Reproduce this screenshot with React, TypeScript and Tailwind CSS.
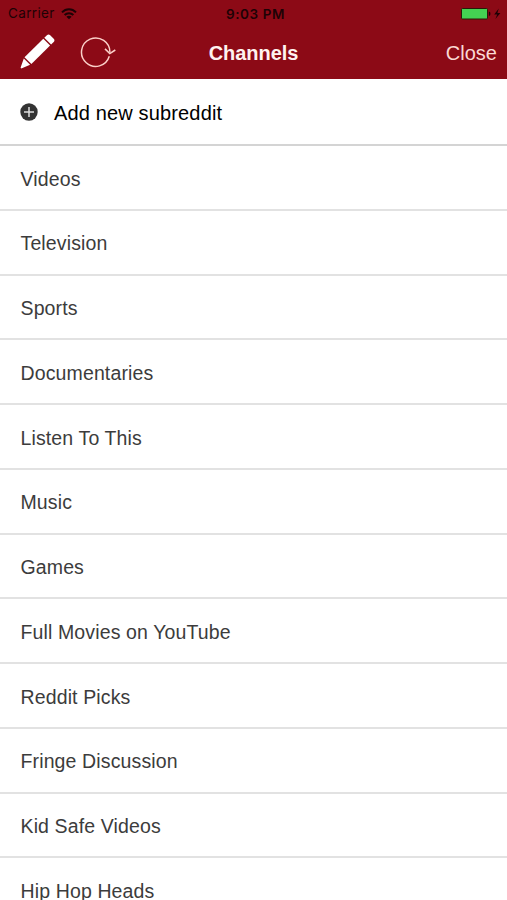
const channels = [
  "Videos",
  "Television",
  "Sports",
  "Documentaries",
  "Listen To This",
  "Music",
  "Games",
  "Full Movies on YouTube",
  "Reddit Picks",
  "Fringe Discussion",
  "Kid Safe Videos",
  "Hip Hop Heads",
];

function WifiIcon() {
  return (
    <svg width="16" height="12" viewBox="0 0 16 12" fill="none" stroke="#1d0205" strokeWidth="2">
      <path d="M1 4.4C5 .3 11 .3 15 4.4" />
      <path d="M3.6 7C6.1 4.5 9.9 4.5 12.4 7" />
      <path d="M8 11.3 5.4 8.8c1.5-1.3 3.7-1.3 5.2 0z" fill="#1d0205" stroke="none" />
    </svg>
  );
}

function BatteryIcon() {
  return (
    <svg width="42" height="12" viewBox="0 0 42 12">
      <rect x=".5" y=".5" width="26" height="10.5" rx="1" fill="#44d152" stroke="#2a1a08" />
      <path d="M27.9 3.8h.6c1.2.3 1.2 3.6 0 3.9h-.6z" fill="#1d0205" />
      <path d="M37.8.4 33.2 6.4h3L34.4 11l5-6.1h-3z" fill="#1d0205" />
    </svg>
  );
}

function PencilIcon() {
  return (
    <svg width="36" height="36" viewBox="0 0 36 36" fill="#fff">
      <path d="M24.3 3.7 26.9 1.2c1-1 2.3-1 3.3 0l3.5 3.5c1 1 1 2.3 0 3.3L31.1 10.5z" />
      <path d="M23.3 4.7 30.1 11.5 11.4 30.1 4.5 23.3z" />
      <path d="M3.8 24.5 10.1 30.8 1.9 34.3C1 34.6.4 34 .8 33.1z" />
    </svg>
  );
}

function RefreshIcon() {
  return (
    <svg width="36" height="32" viewBox="0 0 36 32" fill="none" stroke="#fbcfc8" strokeWidth="1.5">
      <path d="M29.3 20.3A14.2 14.2 0 1 1 29.9 16.6" />
      <path d="M25 12.9 29.8 17.6 35.3 14" />
    </svg>
  );
}

function AddIcon() {
  return (
    <svg width="18" height="18" viewBox="0 0 18 18">
      <circle cx="9" cy="9" r="8.7" fill="#333" />
      <path d="M9 4v10M4 9h10" stroke="#ddd" strokeWidth="1.5" />
    </svg>
  );
}

export default function App() {
  return (
    <div className="h-[900px] w-[507px] overflow-hidden bg-white font-['Liberation_Sans',Arial,sans-serif]">
      <header className="h-[79px] bg-[#8c0a16] text-white">
        <div className="grid h-[27px] grid-cols-3 items-center pl-2 pr-[4px] font-['Inter',sans-serif] text-[13.5px] text-[#1d0205]">
          <div className="flex items-center gap-[6px]">
            <span className="tracking-[0.35px]">Carrier</span>
            <WifiIcon />
          </div>
          <span className="pt-px text-center font-semibold tracking-[0.6px]">9:03 PM</span>
          <div className="flex justify-end">
            <BatteryIcon />
          </div>
        </div>
        <div className="grid h-[51px] grid-cols-[1fr_auto_1fr] items-center pl-5 pr-[10px]">
          <div className="flex items-center gap-[24px] pb-px">
            <PencilIcon />
            <RefreshIcon />
          </div>
          <h1 className="pr-[10px] text-[20px] font-bold tracking-[-0.05px] text-[#fff3f0]">Channels</h1>
          <button className="text-right text-[20px] text-[#fbd9d4]">Close</button>
        </div>
      </header>

      <button className="flex h-[67px] w-full items-center gap-4 border-b-2 border-[#d4d4d4] pl-5 text-[20px] tracking-[0.15px] text-black">
        <AddIcon />
        <span className="pt-[2px]">Add new subreddit</span>
      </button>

      <ul>
        {channels.map((name) => (
          <li
            key={name}
            className="flex h-[64.75px] items-center border-b-2 border-[#e2e2e2] pl-[20.5px] pt-[3.5px] text-[19.5px] tracking-[0.13px] text-[#3c3c3c]"
          >
            {name}
          </li>
        ))}
      </ul>
    </div>
  );
}
